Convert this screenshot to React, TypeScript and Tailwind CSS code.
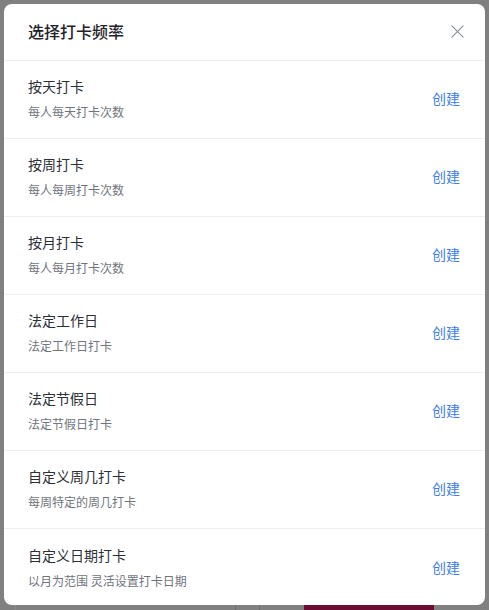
const options = [
  { title: "按天打卡", desc: "每人每天打卡次数" },
  { title: "按周打卡", desc: "每人每周打卡次数" },
  { title: "按月打卡", desc: "每人每月打卡次数" },
  { title: "法定工作日", desc: "法定工作日打卡" },
  { title: "法定节假日", desc: "法定节假日打卡" },
  { title: "自定义周几打卡", desc: "每周特定的周几打卡" },
  { title: "自定义日期打卡", desc: "以月为范围 灵活设置打卡日期" },
];

export default function App() {
  return (
    <div
      className="w-[489px] h-[610px] overflow-hidden bg-[#808080] flex flex-col"
      style={{ fontFamily: '"Noto Sans CJK SC", "Noto Sans", sans-serif' }}
    >
      <div className="mx-1 mt-1 h-[601px] shrink-0 bg-white rounded-lg flex flex-col overflow-hidden">
        <div className="h-[57px] shrink-0 flex items-center justify-between pl-6 pr-[18px] pb-0.5 border-b border-[#eeeff0]">
          <h2 className="text-base font-medium text-[#1f2329]">选择打卡频率</h2>
          <button className="w-5 h-5 flex items-center justify-center text-[#8f959e]">
            <svg width="13" height="13" viewBox="0 0 14 14" fill="none">
              <path
                d="M1 1L13 13M13 1L1 13"
                stroke="currentColor"
                strokeWidth="1.3"
                strokeLinecap="round"
              />
            </svg>
          </button>
        </div>
        <div className="flex flex-col">
          {options.map((item, index) => (
            <div
              key={item.title}
              className={`h-[78px] shrink-0 flex items-center justify-between pl-6 pr-[25px] pb-[3px] ${
                index < options.length - 1 ? "border-b border-[#eeeff0]" : ""
              }`}
            >
              <div className="flex flex-col">
                <span className="text-sm leading-5 text-[#2b2f36]">
                  {item.title}
                </span>
                <span className="mt-2 text-xs leading-4 text-[#70757d]">
                  {item.desc}
                </span>
              </div>
              <button className="text-sm text-[#3c7ee6]">创建</button>
            </div>
          ))}
        </div>
      </div>
      <div className="flex-1 flex">
        <div className="w-[15px]" />
        <div className="w-px bg-[#8a8a8a]" />
        <div className="w-[219px]" />
        <div className="w-px bg-[#6e6e6e]" />
        <div className="w-[23px]" />
        <div className="w-px bg-[#6e6e6e]" />
        <div className="w-[44px]" />
        <div className="w-[130px] bg-[#6b0c35]" />
      </div>
    </div>
  );
}
